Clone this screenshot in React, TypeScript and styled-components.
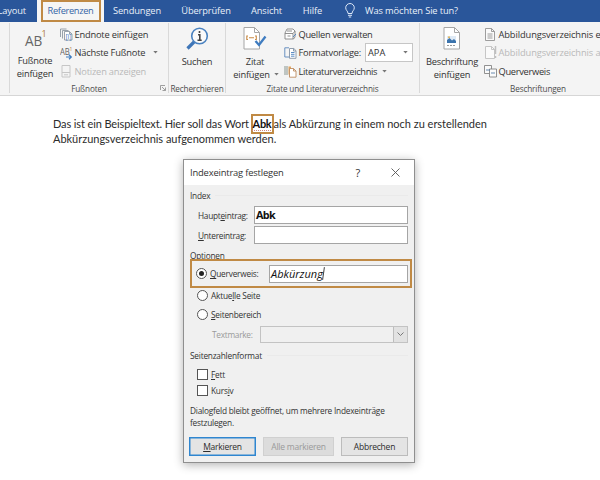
import * as React from "react";
import styled, { createGlobalStyle } from "styled-components";

const GlobalStyle = createGlobalStyle`
    * { box-sizing: border-box; }
    body {
        margin: 0;
        background: #fff;
        font-family: "Open Sans", "Noto Sans", sans-serif;
        font-size: 9.3px;
        color: #333;
        overflow: hidden;
    }
`;

const gold = "#c08a45";

const Text = styled.span`
    white-space: nowrap;
`;

const Window = styled.div`
    width: 600px;
    height: 480px;
    overflow: hidden;
    background: #fff;
`;

/* tab bar */

const TabBar = styled.nav`
    display: flex;
    height: 22px;
    background: #2a569a;
    color: #e9f0f9;
    letter-spacing: -0.12px;
`;

const Tab = styled.div<{ $width: number; $active?: boolean }>`
    flex: none;
    width: ${p => p.$width}px;
    display: flex;
    justify-content: center;
    line-height: 21px;
    background: ${p => (p.$active ? "#f5f5f5" : "transparent")};
    color: ${p => (p.$active ? "#3565a6" : "inherit")};
`;

const FirstTab = styled(Tab)`
    justify-content: flex-end;
    padding-right: 11px;
`;

const TabHighlight = styled.div`
    width: 60px;
    height: 22px;
    border: 2.5px solid ${gold};
    display: flex;
    justify-content: center;
    line-height: 17px;
    letter-spacing: -0.35px;
`;

const TellMe = styled.div`
    display: flex;
    align-items: center;
    gap: 10px;
    margin-left: 11px;
    height: 20px;
`;

/* ribbon */

const RibbonBar = styled.div`
    display: flex;
    height: 74px;
    padding-top: 1px;
    background: #f4f4f4;
    border-bottom: 1px solid #d6d6d6;
    letter-spacing: -0.22px;
`;

const Group = styled.section<{ $width: number }>`
    flex: none;
    width: ${p => p.$width}px;
    height: 70px;
    border-right: 1px solid #d9d9d9;
    display: flex;
    flex-direction: column;
`;

const GroupBody = styled.div`
    display: flex;
    height: 59px;
`;

const GroupLabel = styled.div`
    position: relative;
    height: 12px;
    line-height: 15px;
    font-size: 8.2px;
    letter-spacing: -0.15px;
    text-align: center;
    color: #4c4c4c;
`;

const Launcher = styled.svg`
    position: absolute;
    right: 2px;
    top: 4px;
`;

const BigButton = styled.div<{ $width: number }>`
    flex: none;
    width: ${p => p.$width}px;
    padding-top: 4px;
    display: flex;
    flex-direction: column;
    align-items: center;
    line-height: 12.5px;
    > svg { margin-bottom: 6px; }
`;

const SplitLabel = styled.span`
    display: flex;
    align-items: center;
    gap: 4px;
    margin-left: 2px;
`;

const Rows = styled.div`
    flex: none;
    padding-top: 2px;
`;

const Row = styled.div<{ $disabled?: boolean; $spacing?: number }>`
    height: 18.5px;
    display: flex;
    align-items: center;
    gap: 1.5px;
    color: ${p => (p.$disabled ? "#b9b9b9" : "inherit")};
    letter-spacing: ${p => p.$spacing ?? -0.2}px;
    svg { flex: none; }
`;

const MenuArrow = styled.span<{ $gap: number }>`
    display: flex;
    margin-left: ${p => p.$gap}px;
`;

const StyleSelect = styled.div`
    width: 48px;
    height: 19px;
    margin-left: 2.5px;
    padding: 0 4px 0 2px;
    border: 1px solid #c6c6c6;
    background: #fff;
    display: flex;
    align-items: center;
    justify-content: space-between;
    letter-spacing: 0;
`;

/* document */

const Page = styled.main`
    padding: 20px 0 0 53px;
    height: 63px;
    font-family: Lato, "Open Sans", sans-serif;
    font-size: 11px;
    color: #2c2c2c;
`;

const Line = styled.div<{ $spacing?: number }>`
    height: 15px;
    display: flex;
    align-items: center;
    white-space: pre;
    letter-spacing: ${p => p.$spacing ?? 0}px;
`;

const Lead = styled.span`
    width: 197.5px;
    letter-spacing: -0.12px;
`;

const MarkedWord = styled.b`
    flex: none;
    width: 23px;
    height: 20px;
    border: 2.5px solid ${gold};
    display: flex;
    justify-content: center;
    line-height: 15px;
    color: #111;
    text-decoration: underline dotted #d08a80 1px;
    text-underline-offset: 2px;
    letter-spacing: -0.3px;
`;

/* dialog */

const Dialog = styled.div`
    width: 232px;
    height: 304px;
    margin-left: 183px;
    border: 1px solid #8f8f8f;
    background: #f0f0f0;
    box-shadow: 0 2px 9px rgba(0, 0, 0, 0.3);
    font-size: 8.3px;
    letter-spacing: -0.22px;
`;

const TitleBar = styled.header`
    display: flex;
    align-items: center;
    height: 25px;
    padding: 0 14px 0 6px;
    background: #fff;
    font-size: 9.4px;
    letter-spacing: -0.18px;
`;

const Help = styled.span`
    margin-left: auto;
    margin-right: 31px;
    font-size: 11px;
`;

const Content = styled.div`
    padding: 1px 6px 0 5px;
`;

const SectionTitle = styled.div<{ $height: number }>`
    height: ${p => p.$height}px;
    display: flex;
    align-items: center;
    padding-left: 1px;
    gap: 5px;
    &::after {
        content: "";
        flex: 1;
        height: 1px;
        background: #eaeaea;
    }
`;

const OptionsTitle = styled.div`
    height: 14px;
    padding-left: 1px;
    line-height: 21px;
`;

const Field = styled.label<{ $height: number; $indent: number; $muted?: boolean }>`
    height: ${p => p.$height}px;
    padding-left: ${p => p.$indent}px;
    display: flex;
    align-items: center;
    justify-content: space-between;
    color: ${p => (p.$muted ? "#9a9a9a" : "inherit")};
    letter-spacing: -0.28px;
    u { text-underline-offset: 1px; }
`;

const Input = styled.div<{ $width: number }>`
    width: ${p => p.$width}px;
    height: 18px;
    padding-left: 1px;
    border: 1px solid #a5a5a5;
    background: #fff;
    display: flex;
    align-items: center;
    font-size: 11px;
    line-height: 14px;
    letter-spacing: 0;
    color: #111;
    b { font-size: 10.8px; letter-spacing: -0.6px; }
`;

const Caret = styled.i`
    width: 1px;
    height: 13px;
    background: #444;
    transform: rotate(8deg);
`;

const Combo = styled.div`
    width: 148px;
    height: 17px;
    border: 1px solid #c3c3c3;
    display: flex;
    justify-content: flex-end;
`;

const ComboButton = styled.span`
    width: 14px;
    border-left: 1px solid #bdbdbd;
    background: #e2e2e2;
    display: flex;
    align-items: center;
    justify-content: center;
`;

const Highlight = styled.div`
    position: relative;
    width: 222px;
    height: 29px;
    margin-left: 1px;
    padding: 0 2px 0 4px;
    border: 2.5px solid ${gold};
    display: flex;
    align-items: center;
    justify-content: space-between;
`;

const Option = styled.label<{ $height?: number }>`
    height: ${p => p.$height ?? 20}px;
    display: flex;
    align-items: center;
    gap: 3px;
    u { text-underline-offset: 1px; }
`;

const Options = styled.div`
    padding-left: 8px;
`;

const Radio = styled.span`
    width: 11px;
    height: 11px;
    border: 1px solid #555;
    border-radius: 50%;
    background: #fff;
    display: flex;
    align-items: center;
    justify-content: center;
`;

const Dot = styled.span`
    width: 5px;
    height: 5px;
    border-radius: 50%;
    background: #222;
`;

const Checkbox = styled.span`
    width: 11px;
    height: 11px;
    border: 1px solid #555;
    background: #fff;
`;

const Note = styled.p`
    margin: 0;
    padding: 4px 0 0 1px;
    height: 36px;
    line-height: 11.5px;
`;

const Buttons = styled.footer`
    display: flex;
    justify-content: space-between;
`;

const Button = styled.div<{ $width: number; $kind?: "primary" | "disabled" }>`
    width: ${p => p.$width}px;
    height: 19px;
    line-height: 17px;
    text-align: center;
    font-size: 8.5px;
    border: 1px solid ${p => (p.$kind === "primary" ? "#2f86d0" : p.$kind === "disabled" ? "#d0d0d0" : "#bcbcbc")};
    box-shadow: ${p => (p.$kind === "primary" ? "inset 0 0 0 0.5px #2f86d0" : "none")};
    background: ${p => (p.$kind === "disabled" ? "#dcdcdc" : "#e4e4e4")};
    color: ${p => (p.$kind === "disabled" ? "#9a9a9a" : "#2c2c2c")};
`;

/* icons */

const Arrow = () => (
    <svg width="5" height="3" viewBox="0 0 5 3"><path d="M.3 0h4.400L2.500 2.500z" fill="#777" /></svg>
);

const BulbIcon = () => (
    <svg width="10" height="15" viewBox="0 0 10 15" fill="none" stroke="#dce8f8">
        <path d="M3 10.500C3 8 .7 7.400.7 4.800a4.300 4.300 0 0 1 8.600 0C9.300 7.400 7 8 7 10.500zM3 12.300h4M3.800 14h2.400" />
    </svg>
);

const FootnoteIcon = () => (
    <svg width="24" height="22" viewBox="0 0 24 22">
        <text x="2" y="18.500" fontSize="15" textLength="17" lengthAdjust="spacingAndGlyphs" fill="#666">AB</text>
        <text x="18.500" y="9.500" fontSize="9" fill="#b07a3c">1</text>
    </svg>
);

const EndnoteIcon = () => (
    <svg width="13" height="13" viewBox="0 0 13 13" fill="none" stroke="#8f98a3" strokeWidth=".9">
        <path d="M.5 9V1h6M2.500 10.500V2.500h6" />
        <path d="M4.500 3.500h5l2.500 2.500v6H4.500z" fill="#fff" />
        <path d="M9.500 3.500V6H12" />
        <text x="5.500" y="10.500" fontSize="7" fill="#4a7fbd" stroke="none">[i]</text>
    </svg>
);

const NextNoteIcon = () => (
    <svg width="13" height="14" viewBox="0 0 13 14">
        <text x="0" y="8.500" fontSize="9" textLength="9.500" lengthAdjust="spacingAndGlyphs" fill="#666">AB</text>
        <text x="9.500" y="4.500" fontSize="5" fill="#b07a3c">1</text>
        <path d="M6 11h5.500M9 8.800l2.300 2.200L9 13.200" fill="none" stroke="#3c7cc0" strokeWidth="1.200" />
    </svg>
);

const NotesIcon = () => (
    <svg width="13" height="13" viewBox="0 0 13 13" fill="none" stroke="#c6c6c6">
        <path d="M2 .5h8v11.500H2zM2 7.500h8M4 9.800h4" />
    </svg>
);

const LauncherIcon = () => (
    <Launcher width="6" height="6" viewBox="0 0 6 6" fill="none" stroke="#888" strokeWidth=".8">
        <path d="M.5 5V.5H5M2 2l3.300 3.300M5.500 2.500v3h-3" />
    </Launcher>
);

const SearchIcon = () => (
    <svg width="24" height="23" viewBox="0 0 24 23" fill="none">
        <path d="M10 14L2.500 21.500" stroke="#3f76b8" strokeWidth="3.200" />
        <circle cx="14.500" cy="9" r="7.800" fill="#fafafa" stroke="#4a82c0" strokeWidth="1.600" />
        <path d="M14.500 4v2M13 7.800h1.800V13M12.500 13.200h4.200" stroke="#444" strokeWidth="1.600" />
    </svg>
);

const CitationIcon = () => (
    <svg width="24" height="23" viewBox="0 0 24 23" fill="none">
        <path d="M1 .5h10.500l5 5V22H1z" fill="#fff" stroke="#a6a6a6" />
        <path d="M11.500.5v5h5" stroke="#a6a6a6" />
        <path d="M5 9H3.800v3.500H5M12 9h1.300v3.500H12M6 10.700h5" stroke="#c98a45" strokeWidth="1.100" />
        <path d="M12.500 14l3.500 4 6.500-8.500" stroke="#3f7cc0" strokeWidth="2.300" />
    </svg>
);

const SourcesIcon = () => (
    <svg width="13" height="12" viewBox="0 0 13 12" fill="none" stroke="#858585" strokeWidth=".9">
        <path d="M1 5l2-4h6l2 2v6L9.500 11H1zM1 5.500h8V11M9 5.500L11 3M3 3h5" fill="#fff" />
        <path d="M3.500 8h3" />
        <path d="M9 9l3-3" stroke="#4a7fbd" />
    </svg>
);

const StyleIcon = () => (
    <svg width="13" height="12" viewBox="0 0 13 12" fill="none" stroke="#8593a5" strokeWidth=".9">
        <path d="M5 .8H.8v9.200h4.700" stroke="#5a86bb" />
        <path d="M5.500 1.500h4.300L12 3.700v7.600H5.500z" fill="#fff" />
        <path d="M9.500 1.500V4H12" />
        <path d="M7 5.500h3.500M7 7.300h3.500M7 9.200h3.500" stroke="#4a7fbd" />
    </svg>
);

const BibliographyIcon = () => (
    <svg width="13" height="13" viewBox="0 0 13 13" fill="none">
        <path d="M1 1v9M3 1v9" stroke="#9aa5a0" strokeWidth="1.200" />
        <path d="M4.500 1.500H7v8H4.500z" fill="#e3a45c" />
        <path d="M5.500 3.500h4L12 6v6.200H5.500z" fill="#fff" stroke="#bd8c61" strokeWidth=".9" />
        <path d="M9.500 3.500V6H12" stroke="#bd8c61" strokeWidth=".9" />
    </svg>
);

const CaptionIcon = () => (
    <svg width="18" height="23" viewBox="0 0 18 23" fill="none">
        <path d="M1 .5h10.500l5 5V22H1z" fill="#fff" stroke="#a6a6a6" />
        <path d="M11.500.5v5h5" stroke="#a6a6a6" />
        <path d="M4 9h9v7H4z" fill="#dfeaf5" />
        <path d="M4 16v-3l2.500-2 2.500 2.500 2-1.500 2 2v2z" fill="#3c74ad" />
        <circle cx="6" cy="10.300" r="1" fill="#e0b354" />
        <path d="M4 18.500h8" stroke="#999" strokeDasharray="2 1" />
    </svg>
);

const PageIcon = ({ disabled }: { disabled?: boolean }) => (
    <svg width="13" height="13" viewBox="0 0 13 13" fill="none" stroke={disabled ? "#bfbfbf" : "#929292"} strokeWidth=".9">
        <path d="M1.500.5H7.500L10.500 3.500v9h-9z" fill="#fafafa" />
        <path d="M7.500.5v3h3" />
        {disabled ? <path d="M11.500 0v8M11.500 10v2" strokeWidth="1.500" /> : <path d="M3.500 6h5M3.500 8h5M3.500 10h5" />}
    </svg>
);

const CrossRefIcon = () => (
    <svg width="13" height="13" viewBox="0 0 13 13" fill="none" stroke="#858585" strokeWidth=".9">
        <path d="M.5.5h7v8h-7z" fill="#fafafa" />
        <path d="M5.500 4h7v8h-7z" fill="#fafafa" />
        <path d="M2 5h4M7 8h4" stroke="#5a7fa8" />
    </svg>
);

const CloseIcon = () => (
    <svg width="9" height="9" viewBox="0 0 9 9"><path d="M.5.5l8 8M8.500.5l-8 8" stroke="#555" strokeWidth=".9" /></svg>
);

const Ribbon = () => (
    <RibbonBar>
        <Group $width={10} />
        <Group $width={159}>
            <GroupBody>
                <BigButton $width={50}>
                    <FootnoteIcon />
                    <Text>Fußnote</Text>
                    <Text>einfügen</Text>
                </BigButton>
                <Rows>
                    <Row><EndnoteIcon /><Text>Endnote einfügen</Text></Row>
                    <Row>
                        <NextNoteIcon /><Text>Nächste Fußnote</Text>
                        <MenuArrow $gap={6}><Arrow /></MenuArrow>
                    </Row>
                    <Row $disabled><NotesIcon /><Text>Notizen anzeigen</Text></Row>
                </Rows>
            </GroupBody>
            <GroupLabel><Text>Fußnoten</Text><LauncherIcon /></GroupLabel>
        </Group>
        <Group $width={57}>
            <GroupBody>
                <BigButton $width={56}><SearchIcon /><Text>Suchen</Text></BigButton>
            </GroupBody>
            <GroupLabel><Text>Recherchieren</Text></GroupLabel>
        </Group>
        <Group $width={194}>
            <GroupBody>
                <BigButton $width={58}>
                    <CitationIcon />
                    <Text>Zitat</Text>
                    <SplitLabel>einfügen<Arrow /></SplitLabel>
                </BigButton>
                <Rows>
                    <Row $spacing={-0.28}><SourcesIcon /><Text>Quellen verwalten</Text></Row>
                    <Row $spacing={-0.22}>
                        <StyleIcon /><Text>Formatvorlage:</Text>
                        <StyleSelect>APA<Arrow /></StyleSelect>
                    </Row>
                    <Row $spacing={-0.36}>
                        <BibliographyIcon /><Text>Literaturverzeichnis</Text>
                        <MenuArrow $gap={3}><Arrow /></MenuArrow>
                    </Row>
                </Rows>
            </GroupBody>
            <GroupLabel><Text>Zitate und Literaturverzeichnis</Text></GroupLabel>
        </Group>
        <Group $width={237}>
            <GroupBody>
                <BigButton $width={64}>
                    <CaptionIcon />
                    <Text>Beschriftung</Text>
                    <Text>einfügen</Text>
                </BigButton>
                <Rows>
                    <Row $spacing={-0.1}><PageIcon /><Text>Abbildungsverzeichnis einfügen</Text></Row>
                    <Row $spacing={-0.1} $disabled><PageIcon disabled /><Text>Abbildungsverzeichnis aktualisieren</Text></Row>
                    <Row $spacing={-0.3}><CrossRefIcon /><Text>Querverweis</Text></Row>
                </Rows>
            </GroupBody>
            <GroupLabel><Text>Beschriftungen</Text></GroupLabel>
        </Group>
    </RibbonBar>
);

const IndexDialog = () => (
    <Dialog>
        <TitleBar>
            <Text>Indexeintrag festlegen</Text>
            <Help>?</Help>
            <CloseIcon />
        </TitleBar>
        <Content>
            <SectionTitle $height={19}>Index</SectionTitle>
            <Field $height={20} $indent={9}>
                <Text>Haupt<u>e</u>intrag:</Text>
                <Input $width={154}><b>Abk</b></Input>
            </Field>
            <Field $height={20} $indent={9}>
                <Text><u>U</u>ntereintrag:</Text>
                <Input $width={154} />
            </Field>
            <OptionsTitle>Optionen</OptionsTitle>
            <Highlight>
                <Option>
                    <Radio><Dot /></Radio>
                    <Text><u>Q</u>uerverweis:</Text>
                </Option>
                <Input $width={139}><em>Abkürzung</em><Caret /></Input>
            </Highlight>
            <Options>
                <Option $height={14}><Radio /><Text>Aktue<u>l</u>le Seite</Text></Option>
                <Option $height={24}><Radio /><Text><u>S</u>eitenbereich</Text></Option>
            </Options>
            <Field $height={17} $indent={23} $muted>
                <Text>Textmarke:</Text>
                <Combo>
                    <ComboButton>
                        <svg width="7" height="5" viewBox="0 0 7 5"><path d="M.5.500L3.500 3.500 6.500.5" fill="none" stroke="#777" /></svg>
                    </ComboButton>
                </Combo>
            </Field>
            <SectionTitle $height={25}>Seitenzahlenformat</SectionTitle>
            <Options>
                <Option $height={12}><Checkbox /><Text><u>F</u>ett</Text></Option>
                <Option $height={21}><Checkbox /><Text>Kurs<u>i</u>v</Text></Option>
            </Options>
            <Note>
                <Text>Dialogfeld bleibt geöffnet, um mehrere Indexeinträge</Text><br />
                <Text>festzulegen.</Text>
            </Note>
            <Buttons>
                <Button $width={67} $kind="primary"><u>M</u>arkieren</Button>
                <Button $width={71} $kind="disabled">Alle markieren</Button>
                <Button $width={67}>Abbrechen</Button>
            </Buttons>
        </Content>
    </Dialog>
);

const App = () => (
    <Window>
        <GlobalStyle />
        <TabBar>
            <FirstTab $width={37}><Text>Layout</Text></FirstTab>
            <Tab $width={67} $active><TabHighlight><Text>Referenzen</Text></TabHighlight></Tab>
            <Tab $width={66}><Text>Sendungen</Text></Tab>
            <Tab $width={72}><Text>Überprüfen</Text></Tab>
            <Tab $width={49}><Text>Ansicht</Text></Tab>
            <Tab $width={43}><Text>Hilfe</Text></Tab>
            <TellMe><BulbIcon /><Text>Was möchten Sie tun?</Text></TellMe>
        </TabBar>
        <Ribbon />
        <Page>
            <Line $spacing={-0.02}>
                <Lead>Das ist ein Beispieltext. Hier soll das Wort</Lead>
                <MarkedWord>Abk</MarkedWord>
                <Text> als Abkürzung in einem noch zu erstellenden</Text>
            </Line>
            <Line $spacing={-0.02}>Abkürzungsverzeichnis aufgenommen werden.</Line>
        </Page>
        <IndexDialog />
    </Window>
);

export default App;
